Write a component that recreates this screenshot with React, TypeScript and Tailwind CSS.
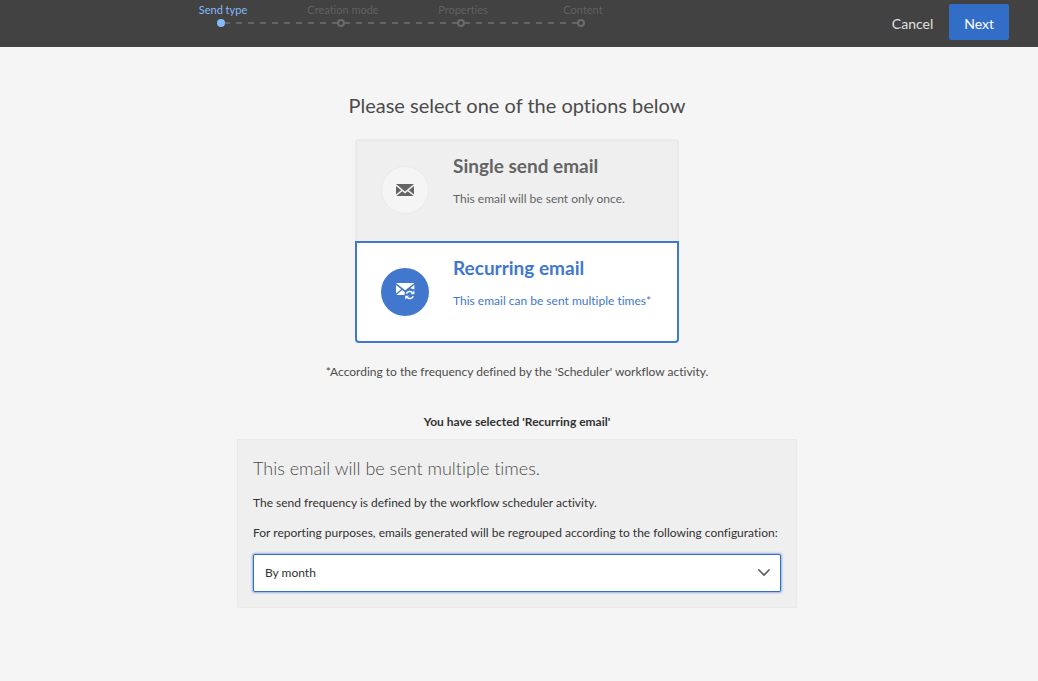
import { useState } from "react";

const steps = ["Send type", "Creation mode", "Properties", "Content"];

function Step({ label, index }: { label: string; index: number }) {
  const active = index === 0;
  const last = index === steps.length - 1;
  return (
    <li className="w-[120px]" aria-current={active ? "step" : undefined}>
      <div
        className={`mb-px pl-1 text-center text-[11px] leading-4 ${active ? "text-[#85b9fb]" : "text-[#616161]"}`}
      >
        {label}
      </div>
      <div className="flex items-center">
        <span
          className={`h-0.5 flex-1 ${active ? "" : "bg-[repeating-linear-gradient(to_right,transparent_0_3px,#646464_3px_9px,transparent_9px_12px)]"}`}
        />
        <span
          className={`size-2 rounded-full ${active ? "bg-[#85b9fb]" : "border-2 border-[#6b6b6b]"}`}
        />
        <span
          className={`h-0.5 flex-1 ${last ? "" : "bg-[repeating-linear-gradient(to_right,#646464_0_5px,transparent_5px_11px,#646464_11px_12px)]"}`}
        />
      </div>
    </li>
  );
}

function EmailIcon() {
  return (
    <svg viewBox="0 0 18 12" width="18" height="12" fill="currentColor" aria-hidden="true">
      <path d="M0 0H18L9 7.6Z" />
      <path d="M0 1.9L5.2 6.3L0 10.4ZM18 1.9V10.4L12.8 6.3Z" />
      <path d="M6.3 7.2L9 9.5L11.7 7.2L17.6 12H.4Z" />
    </svg>
  );
}

function RecurringIcon() {
  return (
    <svg viewBox="0 0 19 18" width="19" height="18" fill="currentColor" aria-hidden="true">
      <path d="M0 0H18.4L9.2 7.2Z" />
      <path d="M0 1.9L5.2 6.2L0 10.4ZM18.4 1.7V6.4L14.2 5.2Z" />
      <path d="M6.2 7.1L8.8 9.2L8.4 12H.4Z" />
      <path d="M10.3 10.8A3.7 3.7 0 0 1 16.4 9.6M17.3 13.2A3.7 3.7 0 0 1 11.2 14.4" fill="none" stroke="currentColor" strokeWidth="1.6" />
      <path d="M18.4 7.4V11.2H14.6ZM9.2 16.6V12.8H13Z" />
    </svg>
  );
}

export default function App() {
  const [kind, setKind] = useState("recurring");
  const single = kind === "single";
  return (
    <div className="min-h-screen bg-[#f5f5f5] font-[Lato,'Noto_Sans',sans-serif] text-xs text-[#323232] [font-variant-ligatures:none]">
      <header className="flex h-[47px] items-start justify-between bg-[#424242] pr-[29px] pl-[161px]">
        <ol className="flex pt-0.5">
          {steps.map((s, i) => (
            <Step key={s} label={s} index={i} />
          ))}
        </ol>
        <div className="flex gap-4 pt-1 text-sm">
          <button type="button" className="h-9 pt-1 text-[#e0e0e0]">Cancel</button>
          <button type="button" className="h-9 rounded-xs bg-[#326ec8] px-[15px] pt-1 text-white">Next</button>
        </div>
      </header>

      <main className="flex flex-col items-center pt-11 pr-1 pb-16">
        <h1 className="text-xl leading-7 text-[#4b4b4b]">Please select one of the options below</h1>

        <div className="mt-5 w-[324px]" role="radiogroup" aria-label="Send type">
          <label
            className={`flex h-[102px] cursor-pointer rounded-t border-2 px-6 ${single ? "border-[#4178cd] bg-white text-[#4178cd]" : "border-b-0 border-[#eaeaea] bg-[#efefef] text-[#646464]"}`}
          >
            <input type="radio" name="kind" className="sr-only" checked={single} onChange={() => setKind("single")} />
            <span className={`mt-[25px] flex size-12 shrink-0 items-center justify-center rounded-full ${single ? "bg-[#4178cd] text-white" : "border border-[#eaeaea] bg-[#f5f5f5]"}`}>
              <EmailIcon />
            </span>
            <span className="ml-6 flex flex-col gap-[11px] pt-[11px]">
              <span className="text-[19px] leading-7 font-bold">Single send email</span>
              <span className="leading-4">This email will be sent only once.</span>
            </span>
          </label>
          <label
            className={`flex h-[102px] cursor-pointer rounded-b border-2 px-6 ${single ? "border-t-0 border-[#eaeaea] bg-[#efefef] text-[#646464]" : "border-[#4178cd] bg-white text-[#4178cd]"}`}
          >
            <input type="radio" name="kind" className="sr-only" checked={!single} onChange={() => setKind("recurring")} />
            <span className={`mt-[25px] flex size-12 shrink-0 items-center justify-center rounded-full ${single ? "border border-[#eaeaea] bg-[#f5f5f5]" : "bg-[#4178cd] text-white"}`}>
              <RecurringIcon />
            </span>
            <span className="ml-6 flex flex-col gap-[11px] pt-[11px]">
              <span className="text-[19px] leading-7 font-bold">Recurring email</span>
              <span className="leading-4">This email can be sent multiple times*</span>
            </span>
          </label>
        </div>

        <p className="mt-[21px] leading-4 text-[#4b4b4b]">
          *According to the frequency defined by the 'Scheduler' workflow activity.
        </p>
        <h2 className="mt-[34px] leading-4 font-bold">
          You have selected '{single ? "Single send email" : "Recurring email"}'
        </h2>

        <section className="mt-[9px] w-[560px] border border-[#eaeaea] bg-[#efefef] p-[15px]">
          <h3 className="text-lg leading-[26px] font-light text-[#4b4b4b]">This email will be sent multiple times.</h3>
          <p className="mt-[14px] leading-4">The send frequency is defined by the workflow scheduler activity.</p>
          <label htmlFor="period" className="mt-[14px] block leading-4">
            For reporting purposes, emails generated will be regrouped according to the following configuration:
          </label>
          <div className="mt-[13px] grid items-center">
            <select
              id="period"
              defaultValue="By month"
              className="col-start-1 row-start-1 h-[38px] w-full appearance-none rounded-xs border border-[#326ec8] bg-white px-[11px] shadow-[0_0_2px_1px_#4178cd80] outline-none"
            >
              <option>By day</option>
              <option>By month</option>
              <option>By year</option>
            </select>
            <svg viewBox="0 0 12 8" className="pointer-events-none col-start-1 row-start-1 mr-[11px] h-2 w-3 justify-self-end" fill="none" stroke="#646464" strokeWidth="1.8" aria-hidden="true">
              <path d="M1 1L6 6.2L11 1" strokeLinecap="round" strokeLinejoin="round" />
            </svg>
          </div>
        </section>
      </main>
    </div>
  );
}
